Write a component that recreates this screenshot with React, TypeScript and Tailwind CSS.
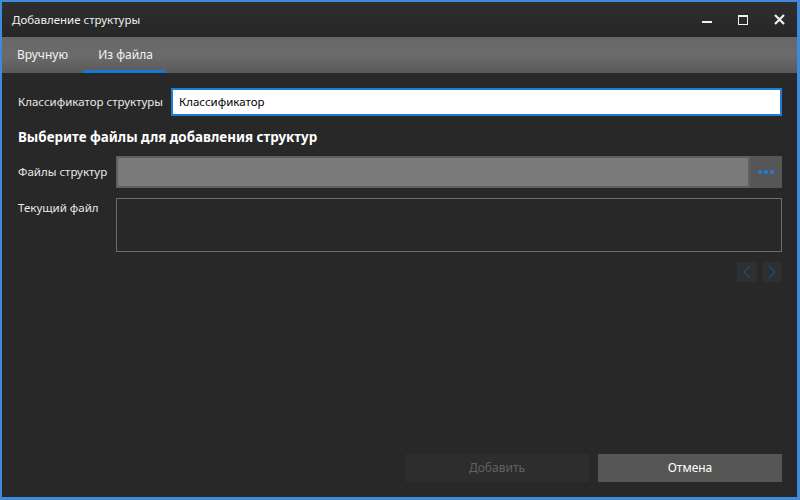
import React from 'react';

const font = { fontFamily: '"Noto Sans", "Open Sans", sans-serif' };

function Field({ label, children }: { label: string; children: React.ReactNode }) {
  return (
    <div className="flex items-center">
      <div className="w-[98px] shrink-0 text-[11.5px] text-[#e8e8e8]">{label}</div>
      {children}
    </div>
  );
}

export default function App() {
  return (
    <div
      className="w-[800px] h-[500px] flex flex-col border-2 border-b-[3px] border-r-[3px] border-[#3d8bd9] bg-[#282828] overflow-hidden"
      style={font}
    >
      {/* title bar */}
      <div className="h-[35px] shrink-0 flex items-center bg-gradient-to-b from-[#2e2e2e] to-[#272727] pl-[10px]">
        <span className="text-[11.5px] text-[#f0f0f0]">Добавление структуры</span>
        <div className="ml-auto flex items-center h-full">
          <div className="w-[36px] h-full flex items-center justify-center">
            <div className="w-[10px] h-[2px] bg-[#f0f0f0] mt-[4px]" />
          </div>
          <div className="w-[36px] h-full flex items-center justify-center">
            <div className="w-[10px] h-[10px] border border-t-2 border-[#f0f0f0]" />
          </div>
          <div className="w-[36px] h-full flex items-center justify-center">
            <svg width="11" height="11" viewBox="0 0 11 11">
              <path d="M1 1L10 10M10 1L1 10" stroke="#f0f0f0" strokeWidth="2.2" />
            </svg>
          </div>
        </div>
      </div>

      {/* tabs */}
      <div className="h-[36px] shrink-0 flex bg-gradient-to-b from-[#676767] via-[#6b6b6b] to-[#5a5a5a] text-[12px] text-[#f2f2f2]">
        <div className="w-[81px] flex items-center justify-center">Вручную</div>
        <div className="w-[83px] flex items-center justify-center relative pl-[2px]">
          Из файла
          <div className="absolute left-0 right-0 bottom-0 h-[3px] bg-[#1478d4]" />
        </div>
      </div>

      {/* body */}
      <div className="flex-1 flex flex-col pl-4 pr-[15px] pt-[15px] pb-[15px]">
        <div className="flex items-center h-[28px]">
          <div className="w-[153px] shrink-0 text-[11.5px] text-[#e8e8e8]">Классификатор структуры</div>
          <div className="flex-1 h-full bg-white border-2 border-[#1e7bd6] flex items-center px-[6px] text-[11.5px] text-black">
            Классификатор
          </div>
        </div>

        <div className="mt-[11px] text-[13.4px] font-bold text-white">Выберите файлы для добавления структур</div>

        <div className="mt-[9px]">
          <Field label="Файлы структур">
            <div className="flex-1 h-[32px] flex">
              <div className="flex-1 bg-[#7a7a7a] border-2 border-[#5f5f5f]" />
              <div className="w-[32px] bg-[#565656] flex items-center justify-center gap-[2px]">
                <span className="w-[4px] h-[4px] rounded-full bg-[#1b7fe0]" />
                <span className="w-[4px] h-[4px] rounded-full bg-[#1b7fe0]" />
                <span className="w-[4px] h-[4px] rounded-full bg-[#1b7fe0]" />
              </div>
            </div>
          </Field>
        </div>

        <div className="mt-[10px] flex">
          <div className="w-[98px] shrink-0 text-[11.5px] text-[#e8e8e8] pt-[1px]">Текущий файл</div>
          <div className="flex-1 h-[54px] border border-[#6e6e6e]" />
        </div>

        <div className="mt-[10px] flex justify-end gap-[5px]">
          <div className="w-[20px] h-[20px] bg-[#2f2f2f] flex items-center justify-center">
            <svg width="10" height="14" viewBox="0 0 10 14">
              <path d="M8 1L2 7L8 13" stroke="#1d4b74" strokeWidth="1.3" fill="none" />
            </svg>
          </div>
          <div className="w-[20px] h-[20px] bg-[#2f2f2f] flex items-center justify-center">
            <svg width="10" height="14" viewBox="0 0 10 14">
              <path d="M2 1L8 7L2 13" stroke="#1d4b74" strokeWidth="1.3" fill="none" />
            </svg>
          </div>
        </div>

        <div className="mt-auto flex justify-end gap-[9px]">
          <div className="w-[184px] h-[28px] bg-[#2d2d2d] flex items-center justify-center text-[12px] text-[#606060]">
            Добавить
          </div>
          <div className="w-[184px] h-[28px] bg-[#555555] flex items-center justify-center text-[12px] text-white">
            Отмена
          </div>
        </div>
      </div>
    </div>
  );
}
